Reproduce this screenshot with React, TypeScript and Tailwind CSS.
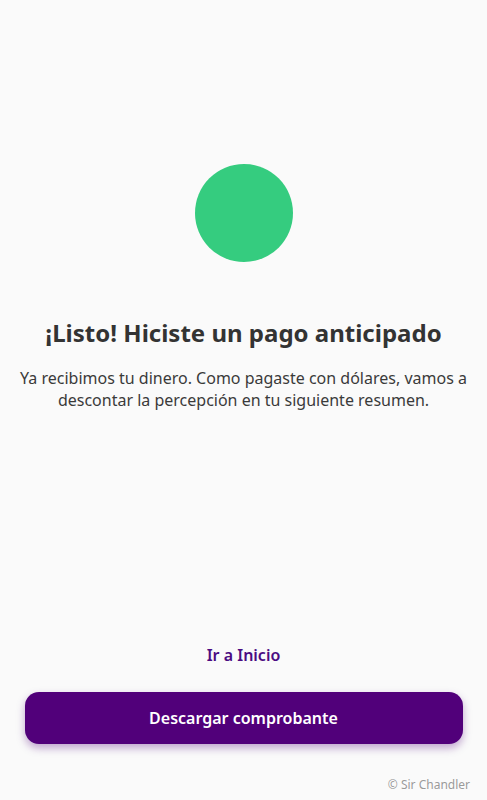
export default function App() {
  return (
    <main
      className="relative flex flex-col items-center h-[800px] w-full bg-[#fafafa] text-[#333333] overflow-hidden"
      style={{ fontFamily: "'Noto Sans', 'Open Sans', sans-serif" }}
    >
      <div className="mt-[164px] w-[98px] h-[98px] rounded-full bg-[#35cc7f]" />
      <h1 className="mt-[56px] text-[24px] leading-[30px] font-bold text-center">
        ¡Listo! Hiciste un pago anticipado
      </h1>
      <p className="mt-[19px] px-4 text-[16px] leading-[22px] text-center text-[#3a3a3a]">
        Ya recibimos tu dinero. Como pagaste con dólares, vamos a descontar la percepción en tu siguiente resumen.
      </p>
      <div className="flex-1" />
      <button className="text-[16px] font-semibold text-[#4b0c82] leading-[22px]">Ir a Inicio</button>
      <button className="mt-[26px] mb-[56px] w-[438px] h-[52px] rounded-[14px] bg-[#51007a] text-white text-[16px] font-semibold shadow-[0_4px_8px_rgba(81,0,122,0.35)]">
        Descargar comprobante
      </button>
      <span
        className="absolute right-[17px] bottom-[6px] text-[12px] text-[#9a9a9a]"
        style={{ textShadow: "0 0 2px #fff, 0 0 2px #fff" }}
      >
        © Sir Chandler
      </span>
    </main>
  );
}
